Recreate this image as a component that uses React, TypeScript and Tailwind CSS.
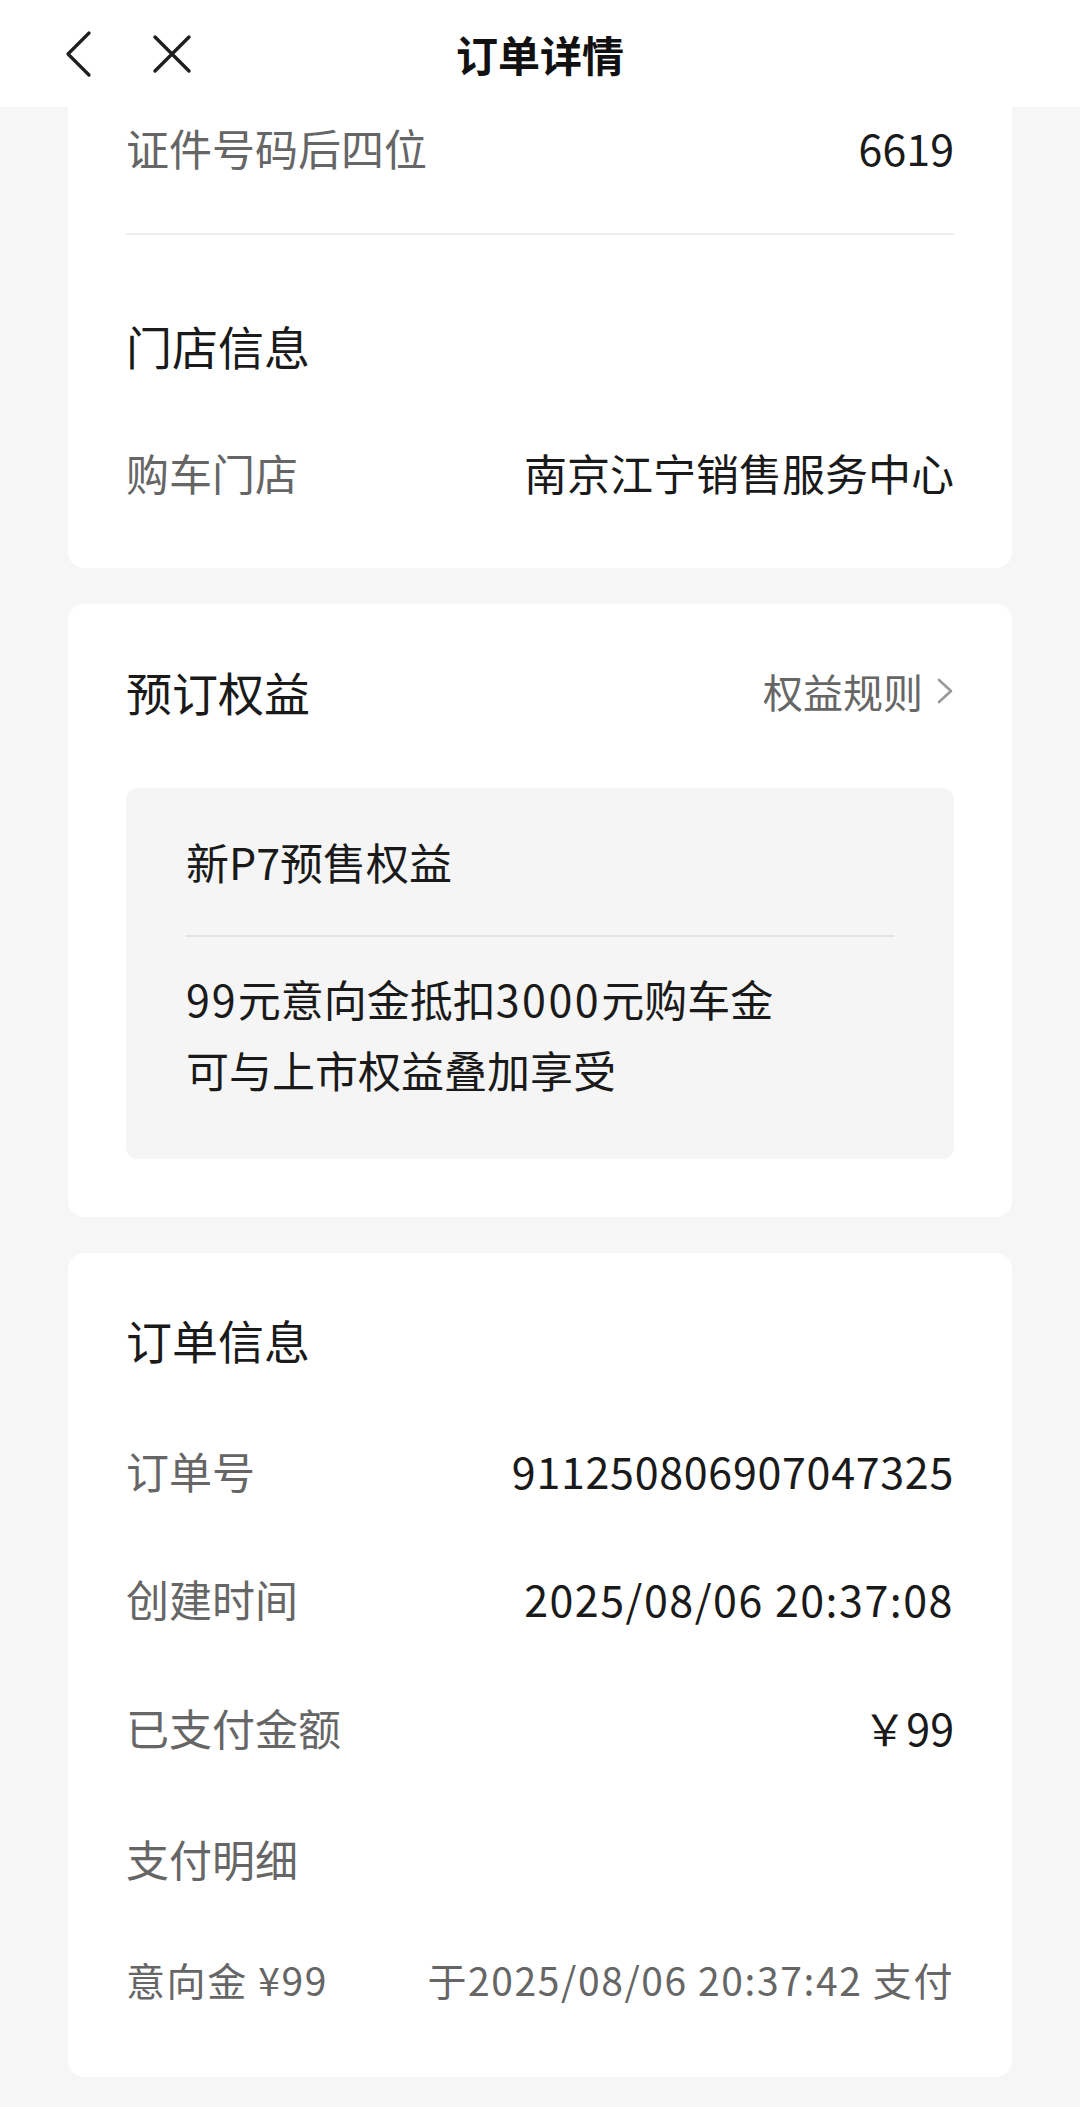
import React from "react"

const font = "font-['Noto_Sans_CJK_SC','Noto_Sans',sans-serif]"

interface RowProps {
  label: string
  value: string
  className?: string
  valueClass?: string
}

const InfoRow = ({ label, value, className = "", valueClass = "" }: RowProps) => (
  <div className={`flex items-center justify-between h-[60px] ${className}`}>
    <span className="text-[43px] text-[#666666]">{label}</span>
    <span className={`text-[43px] text-[#1a1a1a] ${valueClass}`}>{value}</span>
  </div>
)

const SectionTitle = ({ children, className = "" }: { children: React.ReactNode; className?: string }) => (
  <div className={`h-[60px] flex items-center text-[46px] text-[#1a1a1a] ${className}`}>
    {children}
  </div>
)

export default function App() {
  return (
    <div className={`w-[1080px] h-[2107px] bg-[#f6f6f6] overflow-hidden ${font}`}>
      {/* header */}
      <header className="relative h-[107px] bg-white flex items-center">
        <div className="flex items-center pl-[64px] gap-[60px]">
          <svg width="28" height="46" viewBox="0 0 28 46" fill="none">
            <path d="M25 2 L4 23 L25 44" stroke="#1f1f1f" strokeWidth="3.2" strokeLinecap="round" strokeLinejoin="round" />
          </svg>
          <svg width="40" height="40" viewBox="0 0 40 40" fill="none">
            <path d="M3 3 L37 37 M37 3 L3 37" stroke="#1f1f1f" strokeWidth="3.4" strokeLinecap="round" />
          </svg>
        </div>
        <h1 className="absolute left-0 right-0 text-center text-[42px] font-bold text-[#111111]">订单详情</h1>
      </header>

      {/* card 1 */}
      <section className="mx-[68px] bg-white rounded-b-[16px] px-[58px] pt-[10px] pb-[66px]">
        <InfoRow label="证件号码后四位" value="6619" />
        <div className="mt-[56px] h-[2px] bg-[#eeeeee]" />
        <SectionTitle className="mt-[80px]">门店信息</SectionTitle>
        <InfoRow className="mt-[67px]" label="购车门店" value="南京江宁销售服务中心" />
      </section>

      {/* card 2 */}
      <section className="mx-[68px] mt-[36px] bg-white rounded-[16px] px-[58px] pt-[57px] pb-[58px]">
        <div className="flex items-center justify-between">
          <SectionTitle>预订权益</SectionTitle>
          <div className="flex items-center gap-[14px] text-[40px] text-[#666666]">
            <span>权益规则</span>
            <svg width="17" height="26" viewBox="0 0 17 26" fill="none">
              <path d="M2 2 L14 13 L2 24" stroke="#9a9a9a" strokeWidth="2.6" strokeLinecap="round" strokeLinejoin="round" />
            </svg>
          </div>
        </div>
        <div className="mt-[67px] bg-[#f5f5f5] rounded-[12px] px-[60px] pt-[43px] pb-[54px]">
          <div className="h-[60px] flex items-center text-[43px] text-[#1a1a1a]">
            新P7预售权益
          </div>
          <div className="mt-[44px] h-[2px] bg-[#e4e4e4]" />
          <div className="mt-[26px] text-[43px] leading-[71px] text-[#1a1a1a]">
            <p>
              <span className="tracking-[2px]">99</span>元意向金抵扣
              <span className="tracking-[2.5px]">3000</span>元购车金
            </p>
            <p>可与上市权益叠加享受</p>
          </div>
        </div>
      </section>

      {/* card 3 */}
      <section className="mx-[68px] mt-[36px] bg-white rounded-[16px] px-[58px] pt-[56px] pb-[68px]">
        <SectionTitle>订单信息</SectionTitle>
        <InfoRow className="mt-[71px]" label="订单号" value="911250806907047325" valueClass="tracking-[0.7px]" />
        <InfoRow className="mt-[68px]" label="创建时间" value="2025/08/06 20:37:08" valueClass="tracking-[1.5px]" />
        <InfoRow className="mt-[69px]" label="已支付金额" value="￥99" />
        <div className="mt-[71px] h-[60px] flex items-center text-[43px] text-[#666666]">支付明细</div>
        <div className="mt-[61px] h-[60px] flex items-center justify-between text-[39px] text-[#666666] tracking-[1.6px]">
          <span>意向金 ¥99</span>
          <span>于2025/08/06 20:37:42 支付</span>
        </div>
      </section>
    </div>
  )
}
